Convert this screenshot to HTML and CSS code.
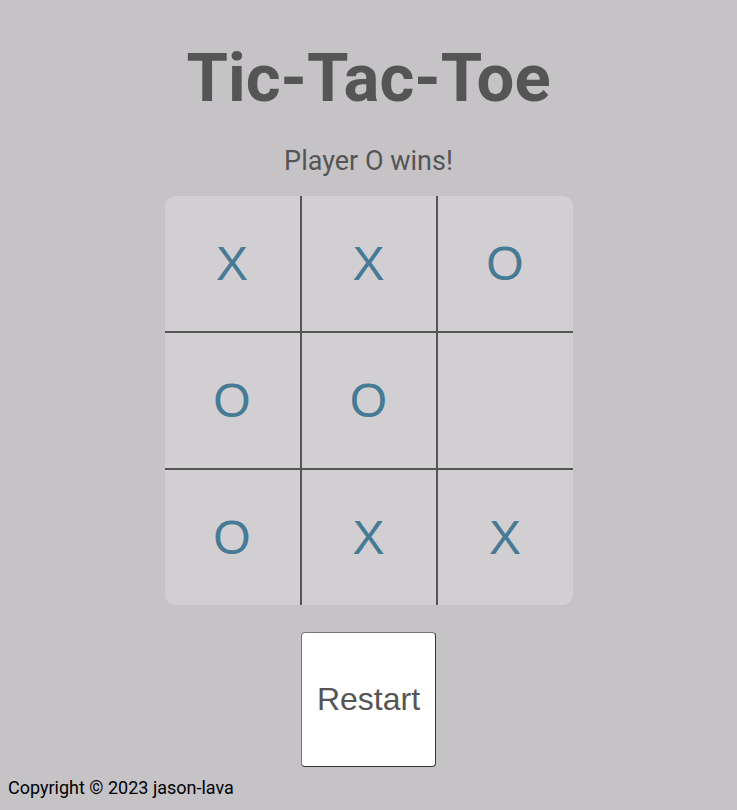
FILE: index.html
```html
<!DOCTYPE html>
<html lang="en">
<head>
<meta charset="utf-8">
<title>Tic-Tac-Toe</title>
<link rel="stylesheet" href="styles.css">
</head>
<body>
<main class="game">
  <h1 class="title">Tic-Tac-Toe</h1>
  <p class="status">Player O wins!</p>
  <div class="board">
    <div class="cell">X</div>
    <div class="cell">X</div>
    <div class="cell">O</div>
    <div class="cell">O</div>
    <div class="cell">O</div>
    <div class="cell"></div>
    <div class="cell">O</div>
    <div class="cell">X</div>
    <div class="cell">X</div>
  </div>
  <button class="restart" type="button">Restart</button>
</main>
<footer class="footer">Copyright © 2023 jason-lava</footer>
</body>
</html>
```

FILE: styles.css
```css
html, body {
  margin: 0;
  padding: 0;
}
body {
  background: #c5c3c6;
  font-family: Roboto, "Liberation Sans", sans-serif;
  min-height: 810px;
}
.game {
  display: flex;
  flex-direction: column;
  align-items: center;
}
.title {
  margin: 37px 0 0;
  font-size: 67px;
  line-height: 82px;
  font-weight: 700;
  color: #555555;
}
.status {
  margin: 27px 0 0;
  font-size: 27px;
  line-height: 30px;
  color: #555555;
}
.board {
  margin-top: 20px;
  width: 408px;
  height: 409px;
  display: grid;
  grid-template-columns: 137px 136px 135px;
  grid-template-rows: 137px 137px 135px;
  background: #d1cfd2;
  border-radius: 10px;
}
.cell {
  box-sizing: border-box;
  display: flex;
  align-items: center;
  justify-content: center;
  font-family: "Liberation Sans", Arial, sans-serif;
  font-size: 48px;
  color: #477a94;
  border-right: 2px solid #555555;
  border-bottom: 2px solid #555555;
}
.cell:nth-child(3n) {
  border-right: none;
}
.cell:nth-child(n+7) {
  border-bottom: none;
}
.restart {
  margin-top: 27px;
  width: 135px;
  height: 135px;
  background: #ffffff;
  border: 1px solid;
  border-color: #777777 #333333 #333333 #777777;
  border-radius: 4px;
  font-family: "Liberation Sans", Arial, sans-serif;
  font-size: 32px;
  color: #555555;
  padding: 0;
}
.footer {
  margin: 10px 0 0 8px;
  font-size: 18px;
  line-height: 21px;
  color: #000000;
}
```
